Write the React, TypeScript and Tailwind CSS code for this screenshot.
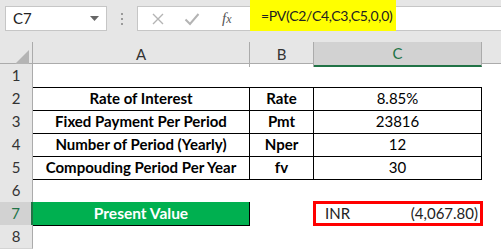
import { ReactNode } from 'react';

const cols = 'grid grid-cols-[33px_217px_64px_168px_19px]';

type Cell = { text?: ReactNode; className?: string };

function RowHead({ n, active }: { n: number; active?: boolean }) {
  return (
    <div
      className={
        active
          ? 'flex items-center justify-center bg-[#d2d2d2] text-[#217346] border-r-2 border-r-[#217346] border-b border-b-[#c8c8c8] text-[15px]'
          : 'flex items-center justify-center bg-[#e6e6e6] text-[#333] border-r border-r-[#ababab] border-b border-b-[#d4d4d4] text-[15px]'
      }
    >
      {n}
    </div>
  );
}

function Row({ n, cells, active }: { n: number; cells: Cell[]; active?: boolean }) {
  return (
    <div className={`${cols} h-[23px]`}>
      <RowHead n={n} active={active} />
      {cells.map((c, i) => (
        <div key={i} className={`flex items-center justify-center text-[15px] ${c.className ?? ''}`}>
          {c.text}
        </div>
      ))}
      <div />
    </div>
  );
}

const tableRows = [
  { n: 2, label: 'Rate of Interest', key: 'Rate', value: '8.85%' },
  { n: 3, label: 'Fixed Payment Per Period', key: 'Pmt', value: '23816' },
  { n: 4, label: 'Number of Period (Yearly)', key: 'Nper', value: '12' },
  { n: 5, label: 'Compouding Period Per Year', key: 'fv', value: '30' },
];

export default function App() {
  return (
    <div className="w-[501px] h-[249px] overflow-hidden bg-white text-black font-['Lato',sans-serif]">
      {/* formula bar */}
      <div className="relative h-[42px] bg-[#e6e6e6] flex items-start pt-[6px] pl-[5px]">
        <div className="w-[102px] h-[25px] bg-white border border-[#c6c6c6] flex items-center justify-between pl-[7px] pr-[7px] text-[15px] text-[#222]">
          <span>C7</span>
          <svg width="9" height="5" viewBox="0 0 9 5">
            <path d="M0 0H9L4.5 5Z" fill="#666" />
          </svg>
        </div>
        <div className="w-[30px] h-[25px] flex flex-col items-center justify-center gap-[3px]">
          <span className="w-[2px] h-[2px] bg-[#9a9a9a]" />
          <span className="w-[2px] h-[2px] bg-[#9a9a9a]" />
          <span className="w-[2px] h-[2px] bg-[#9a9a9a]" />
        </div>
        <div className="flex-1 h-[25px] bg-white border border-r-0 border-[#c6c6c6] flex items-center pl-[13px]">
          <svg width="14" height="14" viewBox="0 0 14 14">
            <path d="M2 2L12 12M12 2L2 12" stroke="#b4b4b4" strokeWidth="1.4" />
          </svg>
          <svg className="ml-[19px]" width="16" height="14" viewBox="0 0 16 14">
            <path d="M1.5 7.5L6 12L14.5 2" stroke="#b4b4b4" strokeWidth="2" fill="none" />
          </svg>
          <span className="ml-[22px] font-['Liberation_Serif',serif] italic text-[15px] text-[#555]">
            f<span className="text-[12px]">x</span>
          </span>
        </div>
        <div className="absolute left-[250px] top-0 w-[146px] h-[31px] bg-[#ffff00] flex items-center pl-[11px] text-[14px] tracking-[-0.3px] text-[#222]">
          =PV(C2/C4,C3,C5,0,0)
        </div>
      </div>

      {/* column headers */}
      <div className={`${cols} h-[22px] bg-[#e6e6e6] border-b border-b-[#ababab] text-[15px] text-[#333]`}>
        <div className="relative border-r border-r-[#ababab]">
          <svg className="absolute right-[3px] bottom-[3px]" width="14" height="14" viewBox="0 0 14 14">
            <path d="M14 0V14H0Z" fill="#b4b4b4" />
          </svg>
        </div>
        <div className="flex items-center justify-center border-r border-r-[#ababab]">A</div>
        <div className="flex items-center justify-center border-r border-r-[#ababab]">B</div>
        <div className="flex items-center justify-center bg-[#d2d2d2] text-[#217346] border-r border-r-[#ababab] border-b-2 border-b-[#217346]">
          C
        </div>
        <div />
      </div>

      {/* rows */}
      <Row
        n={1}
        cells={[
          { className: 'border-b border-black' },
          { className: 'border-b border-black' },
          { className: 'border-b border-black' },
        ]}
      />
      {tableRows.map((r) => (
        <Row
          key={r.n}
          n={r.n}
          cells={[
            { text: r.label, className: 'font-bold text-[15.5px] border-b border-r border-black' },
            { text: r.key, className: 'font-bold text-[15.5px] border-b border-r border-black' },
            { text: r.value, className: 'border-b border-r border-black' },
          ]}
        />
      ))}
      <Row n={6} cells={[{ className: 'border-b border-black' }, {}, {}]} />
      <div className={`${cols} h-[23px]`}>
        <RowHead n={7} active />
        <div className="flex items-center justify-center bg-[#00b050] text-white font-bold text-[15.5px] border-b border-r border-black">
          Present Value
        </div>
        <div />
        <div className="relative">
          <div className="absolute -left-[1px] -top-[1px] w-[170px] h-[25px] border-[3px] border-[#ff0000] flex items-center justify-between pl-[9px] pr-[2px] text-[15px] text-[#222]">
            <span>INR</span>
            <span>(4,067.80)</span>
          </div>
        </div>
        <div />
      </div>
      <Row n={8} cells={[{}, {}, {}]} />
    </div>
  );
}
